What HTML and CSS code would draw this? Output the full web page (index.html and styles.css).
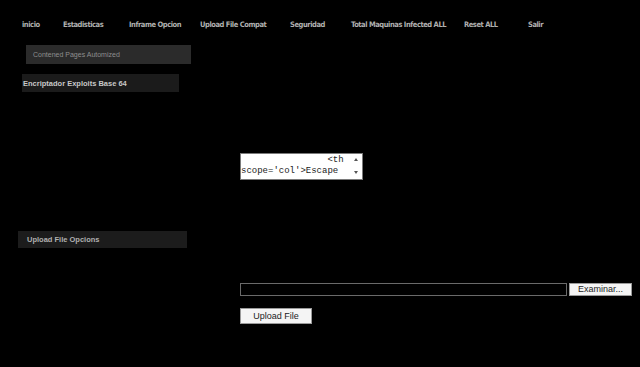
FILE: index.html
```html
<!DOCTYPE html>
<html>
<head>
<meta charset="utf-8">
<link rel="stylesheet" href="styles.css">
</head>
<body>
<ul class="nav">
  <li class="w1">inicio</li>
  <li class="w2">Estadisticas</li>
  <li class="w3">Inframe Opcion</li>
  <li class="w4">Upload File Compat</li>
  <li class="w5">Seguridad</li>
  <li class="w6">Total Maquinas Infected ALL</li>
  <li class="w7">Reset ALL</li>
  <li class="w8">Salir</li>
</ul>
<div class="box box-pages">Contened Pages Automized</div>
<div class="box box-enc">Encriptador Exploits Base 64</div>
<div class="area-row">
  <div class="area-wrap">
    <textarea class="code" rows="2">                &lt;th scope='col'&gt;Escape</textarea>
    <span class="arrow arrow-up"></span>
    <span class="arrow arrow-down"></span>
  </div>
</div>
<div class="box box-upload">Upload File Opcions</div>
<div class="file-row">
  <div class="file-field"></div>
  <button class="btn btn-browse">Examinar...</button>
</div>
<div class="submit-row">
  <button class="btn btn-upload">Upload File</button>
</div>
</body>
</html>
```
FILE: styles.css
```css
html, body {
  margin: 0;
  padding: 0;
  background: #000;
  width: 640px;
  height: 367px;
  overflow: hidden;
}
body {
  font-family: "Liberation Sans", Arial, sans-serif;
}
.nav {
  list-style: none;
  margin: 0;
  padding: 20px 0 0 22px;
  display: flex;
  height: 26px;
  box-sizing: border-box;
}
.nav li {
  font-family: "DejaVu Sans", sans-serif;
  font-stretch: condensed;
  font-weight: bold;
  font-size: 7.5px;
  color: #b0b0b0;
  line-height: 10px;
  white-space: nowrap;
  letter-spacing: -0.45px;
}
.w1 { width: 41px; }
.w2 { width: 66px; }
.w3 { width: 71px; }
.w4 { width: 90px; }
.w5 { width: 61px; }
.w6 { width: 113px; }
.w7 { width: 64px; }
.w8 { width: 30px; }

.box {
  box-sizing: border-box;
  display: flex;
  align-items: center;
  font-size: 7px;
}
.box-pages {
  margin: 19px 0 0 26px;
  width: 165px;
  height: 19px;
  background: #2b2b2b;
  color: #8e8e8e;
  padding-left: 7px;
}
.box-enc {
  margin: 10px 0 0 22px;
  width: 157px;
  height: 18px;
  background: #1b1b1b;
  color: #c8c8c8;
  font-weight: bold;
  font-size: 7.5px;
  padding-left: 1px;
}
.area-row {
  padding: 61px 0 0 240px;
  height: 27px;
}
.area-wrap {
  position: relative;
  width: 123px;
  height: 27px;
}
.code {
  display: block;
  box-sizing: border-box;
  width: 123px;
  height: 27px;
  margin: 0;
  padding: 1px 11px 0 0;
  border: 1px solid #7a7a7a;
  background: #fff;
  color: #222;
  font-family: "Liberation Mono", "DejaVu Sans Mono", monospace;
  font-size: 9px;
  line-height: 11px;
  resize: none;
  overflow: hidden;
}
.arrow {
  position: absolute;
  right: 5px;
  width: 0;
  height: 0;
  border-left: 2px solid transparent;
  border-right: 2px solid transparent;
}
.arrow-up {
  top: 5px;
  border-bottom: 3px solid #555;
}
.arrow-down {
  top: 18px;
  border-top: 3px solid #555;
}
.box-upload {
  margin: 51px 0 0 18px;
  width: 169px;
  height: 17px;
  background: #1c1c1c;
  color: #b0b0b0;
  font-weight: bold;
  font-size: 7.5px;
  padding-left: 9px;
}
.file-row {
  display: flex;
  gap: 2px;
  padding: 35px 0 0 240px;
}
.file-field {
  box-sizing: border-box;
  width: 327px;
  height: 13px;
  border: 1px solid #6a6a6a;
  background: #000;
}
.btn {
  box-sizing: border-box;
  margin: 0;
  background: #f4f4f4;
  border: 1px solid #9a9a9a;
  font-family: "Liberation Sans", Arial, sans-serif;
  color: #222;
  padding: 0;
}
.btn-browse {
  width: 63px;
  height: 13px;
  font-size: 9px;
  line-height: 11px;
}
.submit-row {
  display: flex;
  padding: 12px 0 0 240px;
}
.btn-upload {
  width: 72px;
  height: 16px;
  font-size: 9px;
  line-height: 14px;
}
```
